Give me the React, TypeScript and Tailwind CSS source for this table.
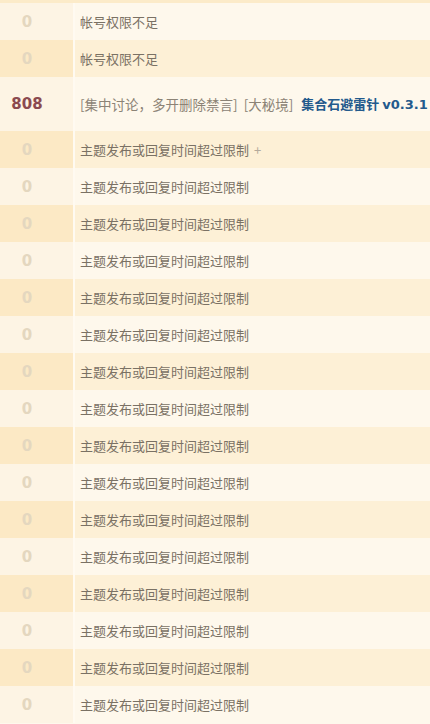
import React from 'react';

interface Row {
  count: number;
  title?: string;
  plus?: boolean;
  tall?: boolean;
}

const rows: Row[] = [
  { count: 0, title: '帐号权限不足' },
  { count: 0, title: '帐号权限不足' },
  { count: 808, tall: true },
  { count: 0, title: '主题发布或回复时间超过限制', plus: true },
  ...Array.from({ length: 15 }, () => ({ count: 0, title: '主题发布或回复时间超过限制' })),
];

function Cell({ row, dark }: { row: Row; dark: boolean }) {
  return (
    <div className={`flex ${row.tall ? 'h-[54px]' : 'h-[37px]'} ${dark ? 'bg-[#fdf0d6]' : 'bg-[#fef8ec]'}`}>
      <div className={`w-[73px] shrink-0 flex items-center pt-[1px] ${dark ? 'bg-[#fce9c5]' : 'bg-[#fdf4e4]'}`}>
        <span
          className={`w-[54px] text-center font-bold text-[15px] font-['DejaVu_Sans',sans-serif] ${
            row.count > 0 ? 'text-[#8b4a4f]' : 'text-[#e4d7bf]'
          }`}
        >
          {row.count}
        </span>
      </div>
      <div className="w-[2px] shrink-0 bg-[#fffaf1]" />
      <div className="flex-1 min-w-0 flex items-center pl-[5px] text-[13px] whitespace-nowrap text-[#7a7164] font-['Noto_Sans_CJK_SC',sans-serif]">
        {row.tall ? (
          <>
            <span className="text-[13.5px] text-[#8c8376]">[集中讨论，多开删除禁言]</span>
            <span className="ml-[6px] text-[13.5px] text-[#8c8376]">[大秘境]</span>
            <span className="ml-[8px] font-bold text-[#235a8c]">
              集合石避雷针 <span className="text-[13px] font-['DejaVu_Sans',sans-serif]">v0.3.1</span>
            </span>
          </>
        ) : (
          <>
            <span>{row.title}</span>
            {row.plus && <span className="ml-[5px] text-[#b3aa9c]">+</span>}
          </>
        )}
      </div>
    </div>
  );
}

export default function App() {
  return (
    <div className="w-[430px] h-[724px] overflow-hidden bg-[#fef8ec]">
      <div className="h-[3px] bg-[#fcebc9]" />
      {rows.map((row, i) => (
        <Cell key={i} row={row} dark={i % 2 === 1} />
      ))}
    </div>
  );
}
